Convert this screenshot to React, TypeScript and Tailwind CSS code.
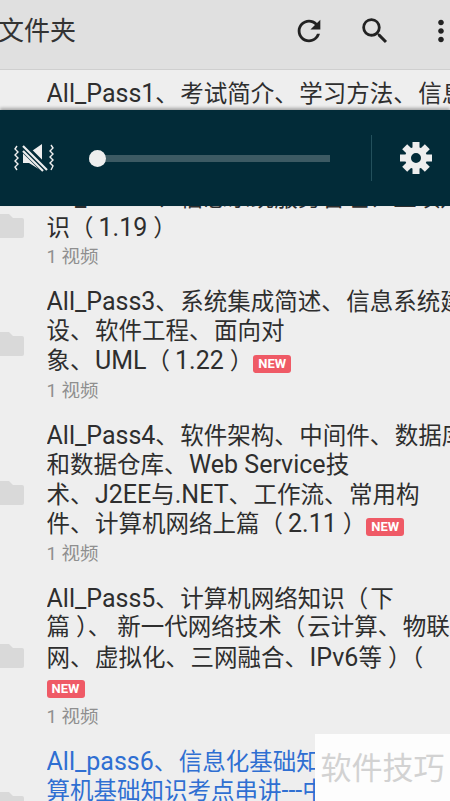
import React from "react";
import { MdMoreVert, MdRefresh, MdSearch } from "react-icons/md";

const NewBadge = () => (
  <span className="inline-flex h-[18px] w-[38px] items-center justify-center rounded-[3px] bg-[#ef5a66] text-[13px] font-bold leading-none text-white align-[1px]">
    NEW
  </span>
);

const Folder = () => (
  <svg width="24" height="24" viewBox="0 0 24 24" className="mb-[4px] shrink-0" fill="#d9d9d9">
    <path d="M-2 0h11l4 4h9a2 2 0 0 1 2 2v16a2 2 0 0 1-2 2H-2z" />
  </svg>
);

const MuteVibrate = () => (
  <svg width="40" height="28" viewBox="0 0 40 28" fill="none">
    <path d="M9 9h6L28 0v27L15 19H9z" fill="#eeeeee" />
    <path d="M5 -1l30 30" stroke="#022b38" strokeWidth="9" />
    <path d="M9 2l24 24M9 7l20 20" stroke="#eeeeee" strokeWidth="2.2" />
    <path d="M3 2L1 5l3 3-3 3 3 3-3 3 3 3-3 3 2 3" stroke="#eeeeee" strokeWidth="1.4" />
    <path d="M37 1l2 3-3 3 3 3-3 3 3 3-3 3 3 3-2 4" stroke="#eeeeee" strokeWidth="1.4" />
  </svg>
);

const Gear = () => (
  <svg width="32" height="32" viewBox="0 0 32 32" className="ml-[28px]" fill="#eeeeee">
    {[0, 45, 90, 135, 180, 225, 270, 315].map((deg) => (
      <rect key={deg} x="12.5" y="0" width="7" height="8" transform={`rotate(${deg} 16 16)`} />
    ))}
    <circle cx="16" cy="16" r="8" fill="none" stroke="#eeeeee" strokeWidth="6" />
  </svg>
);

const LATIN = /^[A-Za-z0-9_.\- ]+$/;

// the original's latin runs are a bit larger than its CJK text, and its
// full-width punctuation has more room around it than Noto's
const Line = ({ text }: { text: string }) => {
  const parts = text.split(/([A-Za-z0-9_.\- ]+|（|）、|）|、|\[N\])/).filter(Boolean);
  return (
    <>
      {parts.map((part, i) => {
        if (part === "[N]") return <NewBadge key={i} />;
        if (LATIN.test(part)) {
          return (
            <span key={i} className="text-[25px]">
              {part}
            </span>
          );
        }
        if (part === "（") {
          const beforeLatin = LATIN.test(parts[i + 1] ?? "");
          return (
            <span key={i} className={beforeLatin ? "mr-[5px]" : "mr-[2px]"}>
              （
            </span>
          );
        }
        if (part === "）") {
          return (
            <span key={i} className="ml-[6px]">
              ）
            </span>
          );
        }
        if (part === "）、") {
          return (
            <span key={i} className="mx-[6px]">
              ）、
            </span>
          );
        }
        if (part === "、") {
          return (
            <span key={i} className="mr-[1.5px]">
              、
            </span>
          );
        }
        return <span key={i}>{part}</span>;
      })}
    </>
  );
};

type Item = {
  lines: string[];
  blue?: boolean;
};

const items: Item[] = [
  { lines: ["All_Pass1、考试简介、学习方法、信息化基础", "知识（1.18）"] },
  { lines: ["All_Pass2、信息系统服务管理、立项知", "识（1.19）"] },
  {
    lines: ["All_Pass3、系统集成简述、信息系统建", "设、软件工程、面向对", "象、UML（1.22）[N]"],
  },
  {
    lines: [
      "All_Pass4、软件架构、中间件、数据库",
      "和数据仓库、Web Service技",
      "术、J2EE与.NET、工作流、常用构",
      "件、计算机网络上篇（2.11）[N]",
    ],
  },
  {
    lines: [
      "All_Pass5、计算机网络知识（下",
      "篇）、新一代网络技术（云计算、物联",
      "网、虚拟化、三网融合、IPv6等）（",
      "[N]",
    ],
  },
  {
    lines: ["All_pass6、信息化基础知识、计", "算机基础知识考点串讲---中级", "项目管理"],
    blue: true,
  },
];

export default function App() {
  return (
    <div className="relative h-[801px] w-[450px] overflow-hidden bg-[#eeeeee] font-['Roboto','Noto_Sans_CJK_SC',sans-serif]">
      <header className="flex h-[70px] items-center border-b border-[#cfcfcf] bg-[#e0e0e0] pb-[7px]">
        <h1 className="ml-[-2px] flex-1 text-[26px] font-normal text-[#333333]">文件夹</h1>
        <MdRefresh size={34} className="mr-[32px] text-[#222222]" />
        <MdSearch size={34} className="mr-[32px] text-[#222222]" />
        <MdMoreVert size={34} className="mr-[-8px] text-[#222222]" />
      </header>

      <ul className="pt-[1.5px]">
        {items.map((item, i) => (
          <li key={i} className="flex items-center py-[7.5px]">
            <Folder />
            <div className="ml-[22.5px] min-w-0 flex-1 overflow-hidden">
              {item.lines.map((line, j) => (
                <p
                  key={j}
                  className={`h-[29.5px] whitespace-nowrap text-[23.5px] leading-[29.5px] ${
                    item.blue ? "text-[#2f6fd2]" : "text-[#2e2e2e]"
                  }`}
                >
                  <Line text={line} />
                </p>
              ))}
              <p className="h-[30px] text-[18.5px] leading-[30px] text-[#8f8f8f]">1 视频</p>
            </div>
          </li>
        ))}
      </ul>

      {/* volume panel */}
      <div className="absolute left-0 top-[110px] flex h-[96px] w-full items-center bg-[#022b38] shadow-[0_-2px_3px_rgba(0,0,0,0.3)]">
        <div className="ml-[14px] w-[40px]">
          <MuteVibrate />
        </div>
        <div className="relative ml-[35px] h-[7px] w-[241px] bg-[#3c5a63]">
          <div className="absolute left-0 top-[-5px] h-[17px] w-[17px] rounded-full bg-[#eeeeee]" />
        </div>
        <div className="ml-[41px] h-[46px] w-px bg-[#23505c]" />
        <Gear />
      </div>

      {/* watermark */}
      <div className="absolute bottom-0 right-0 flex h-[67px] w-[135px] items-center justify-center bg-[#fdfdfd] pt-[4px] text-[31px] text-[#d2d2d2]">
        软件技巧
      </div>
    </div>
  );
}
